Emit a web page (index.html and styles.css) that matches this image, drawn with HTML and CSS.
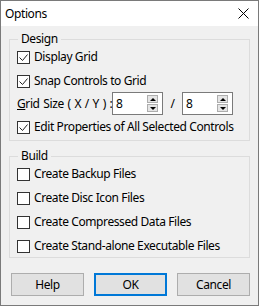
FILE: index.html
```html
<!DOCTYPE html>
<html>
<head>
<meta charset="utf-8">
<link rel="stylesheet" href="styles.css">
</head>
<body>
<div class="window">
  <div class="titlebar">
    <span class="title">Options</span>
    <svg class="close" width="11" height="11" viewBox="0 0 11 11"><path d="M0.5 0.5 L10.5 10.5 M10.5 0.5 L0.5 10.5" stroke="#000" stroke-width="1" fill="none"/></svg>
  </div>
  <div class="content">
    <fieldset class="group design">
      <legend>Design</legend>
      <div class="row"><span class="box"><svg width="11" height="11" viewBox="0 0 11 11"><path d="M1.5 5.5 L4.5 8.5 L9.5 2.5" stroke="#222" stroke-width="1" fill="none"/></svg></span>Display Grid</div>
      <div class="row gap8"><span class="box"><svg width="11" height="11" viewBox="0 0 11 11"><path d="M1.5 5.5 L4.5 8.5 L9.5 2.5" stroke="#222" stroke-width="1" fill="none"/></svg></span>Snap Controls to Grid</div>
      <div class="row grid-row">
        <span class="grid-label"><u>G</u>rid Size ( X / Y ) :</span>
        <span class="spin"><span class="val">8</span><span class="arrows"><span class="arr up"></span><span class="arr down"></span></span></span>
        <span class="slash">/</span>
        <span class="spin"><span class="val">8</span><span class="arrows"><span class="arr up"></span><span class="arr down"></span></span></span>
      </div>
      <div class="row gap4"><span class="box"><svg width="11" height="11" viewBox="0 0 11 11"><path d="M1.5 5.5 L4.5 8.5 L9.5 2.5" stroke="#222" stroke-width="1" fill="none"/></svg></span>Edit Properties of All Selected Controls</div>
    </fieldset>
    <fieldset class="group build">
      <legend>Build</legend>
      <div class="row"><span class="box"></span>Create Backup Files</div>
      <div class="row gap8"><span class="box"></span>Create Disc Icon Files</div>
      <div class="row gap8"><span class="box"></span>Create Compressed Data Files</div>
      <div class="row gap8"><span class="box"></span>Create Stand-alone Executable Files</div>
    </fieldset>
    <div class="buttons">
      <div class="btn">Help</div>
      <div class="btn default">OK</div>
      <div class="btn">Cancel</div>
    </div>
  </div>
</div>
</body>
</html>
```
FILE: styles.css
```css
* { box-sizing: border-box; }
body {
  margin: 0;
  font-family: "Noto Sans", sans-serif;
  font-size: 12px;
  line-height: 16px;
  letter-spacing: -0.4px;
  color: #000;
}
.window {
  width: 259px;
  height: 306px;
  border: 1px solid #7a7a7a;
  background: #f0f0f0;
  display: flex;
  flex-direction: column;
}
.titlebar {
  height: 25px;
  background: #fff;
  display: flex;
  align-items: center;
  justify-content: space-between;
  padding: 0 9px 0 4px;
}
.close { display: block; }
.content {
  padding: 5px 8px 0 8px;
  display: flex;
  flex-direction: column;
}
.group {
  margin: 0;
  border: 1px solid #dcdcdc;
  padding: 2px 7px 5px 7px;
  min-width: 0;
}
.group legend {
  padding: 0 3px;
  margin-left: 1px;
  line-height: 16px;
}
.build {
  margin-top: 7px;
  padding-bottom: 3px;
}
.row {
  display: flex;
  align-items: center;
  height: 16px;
  white-space: nowrap;
}
.gap8 { margin-top: 8px; }
.gap4 { margin-top: 4px; }
.box {
  width: 13px;
  height: 13px;
  border: 1px solid #333;
  background: #fff;
  margin-right: 4px;
  flex: none;
}
.box svg { display: block; }
.grid-row {
  height: 23px;
  margin-top: 3px;
}
.grid-label {
  width: 95px;
  flex: none;
  word-spacing: 1px;
}
.spin {
  width: 51px;
  height: 23px;
  border: 1px solid #7a7a7a;
  background: #fff;
  display: flex;
  align-items: center;
  padding-left: 3px;
  flex: none;
}
.val { flex: 1; }
.arrows {
  display: flex;
  flex-direction: column;
  gap: 1px;
  margin-right: 4px;
}
.arr {
  width: 11px;
  height: 8px;
  border: 1px solid #adadad;
  background: #e5e5e5;
  display: flex;
  align-items: center;
  justify-content: center;
}
.arr::after {
  content: "";
  width: 0;
  height: 0;
  border-left: 3px solid transparent;
  border-right: 3px solid transparent;
}
.up::after { border-bottom: 3px solid #000; }
.down::after { border-top: 3px solid #000; }
.slash {
  width: 19px;
  text-align: center;
  flex: none;
}
.buttons {
  display: flex;
  gap: 10px;
  margin-top: 15px;
  padding-left: 2px;
}
.btn {
  width: 73px;
  height: 23px;
  border: 1px solid #adadad;
  background: #e1e1e1;
  display: flex;
  align-items: center;
  justify-content: center;
}
.btn.default {
  border: 2px solid #0078d7;
}
```
